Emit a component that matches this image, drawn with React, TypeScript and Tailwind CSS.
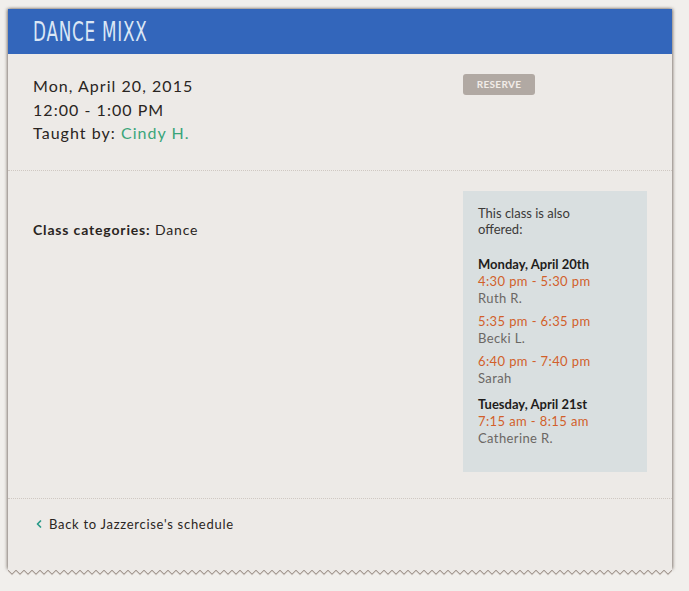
import { ChevronLeft } from 'lucide-react'

const offerings = [
  {
    day: 'Monday, April 20th',
    slots: [
      { time: '4:30 pm - 5:30 pm', teacher: 'Ruth R.' },
      { time: '5:35 pm - 6:35 pm', teacher: 'Becki L.' },
      { time: '6:40 pm - 7:40 pm', teacher: 'Sarah' },
    ],
  },
  {
    day: 'Tuesday, April 21st',
    slots: [{ time: '7:15 am - 8:15 am', teacher: 'Catherine R.' }],
  },
]

function Zigzag() {
  return (
    <svg className="block w-full h-[7px]" aria-hidden="true">
      <defs>
        <pattern id="zz" width="8" height="7" patternUnits="userSpaceOnUse">
          <path d="M0 0 H8 V1 L4 5 L0 1 Z" fill="#edeae7" />
          <path d="M0 1.5 L4 5.5 L8 1.5" fill="none" stroke="#c9c1bb" strokeWidth="1.5" />
          <path d="M0 1 L4 5 L8 1" fill="none" stroke="#a89e97" strokeWidth="1" />
        </pattern>
      </defs>
      <rect width="100%" height="7" fill="url(#zz)" />
    </svg>
  )
}

export default function App() {
  return (
    <div
      className="min-h-[591px] bg-[#f1efec] pt-[9px] pl-2"
      style={{ fontFamily: 'Lato, "Open Sans", sans-serif' }}
    >
      <div className="w-[664px]">
        <div className="bg-[#edeae7] shadow-[1px_0_3px_rgba(60,45,35,0.5),-1px_0_3px_rgba(60,45,35,0.5)]">
          {/* Header */}
          <div className="h-[45px] bg-[#3366bb] flex items-center px-[25px]">
            <h1
              className="inline-block origin-left scale-x-[0.72] text-[26px] leading-none text-[#dbe7f5] tracking-[0.04em] whitespace-nowrap"
              style={{ fontFamily: '"DejaVu Sans Condensed", "Liberation Sans Narrow", sans-serif' }}
            >
              DANCE MIXX
            </h1>
          </div>

          {/* Class info */}
          <div className="flex justify-between pl-[25px] pr-[137px] pt-[20px] pb-[25px] border-b border-dotted border-[#cfc8c2]">
            <div className="text-[16px] leading-[23.5px] text-[#2a2522] tracking-[0.065em]">
              <p>Mon, April 20, 2015</p>
              <p>12:00 - 1:00 PM</p>
              <p>
                Taught by: <span className="text-[#3aa57a]">Cindy H.</span>
              </p>
            </div>
            <button className="h-[21px] w-[72px] rounded-[3px] bg-[#b1a9a3] text-[10px] font-bold tracking-[0.03em] text-[#f1ece8]">
              RESERVE
            </button>
          </div>

          {/* Categories + also offered */}
          <div className="flex justify-between pl-[25px] pr-[25px] pt-[20px] pb-[26px] border-b border-dotted border-[#cfc8c2]">
            <p className="mt-[28px] text-[14px] text-[#2a2522] tracking-[0.06em]">
              <span className="font-bold">Class categories:</span> Dance
            </p>
            <div className="w-[184px] bg-[#d9dfe0] px-[15px] pt-[14px] pb-[16px] text-[13px] leading-[17px]">
              <p className="text-[#3c3a38] leading-[16.5px] mb-[18px]">
                This class is also
                <br />
                offered:
              </p>
              {offerings.map(({ day, slots }) => (
                <div key={day} className="pb-[3px]">
                  <p className="font-bold text-[#1f1d1b]">{day}</p>
                  {slots.map(({ time, teacher }) => (
                    <div key={time} className="mb-[6px] tracking-[0.03em]">
                      <p className="text-[#d25f2b]">{time}</p>
                      <p className="text-[#6b6764]">{teacher}</p>
                    </div>
                  ))}
                </div>
              ))}
            </div>
          </div>

          {/* Footer */}
          <div className="h-[70px] pl-[25px] pt-[16px]">
            <a className="flex items-center gap-[4px] text-[13px] text-[#2a2522] tracking-[0.055em]">
              <ChevronLeft className="w-[12px] h-[12px] text-[#2a9a88]" strokeWidth={3.5} />
              Back to Jazzercise's schedule
            </a>
          </div>
        </div>
        <Zigzag />
      </div>
    </div>
  )
}
